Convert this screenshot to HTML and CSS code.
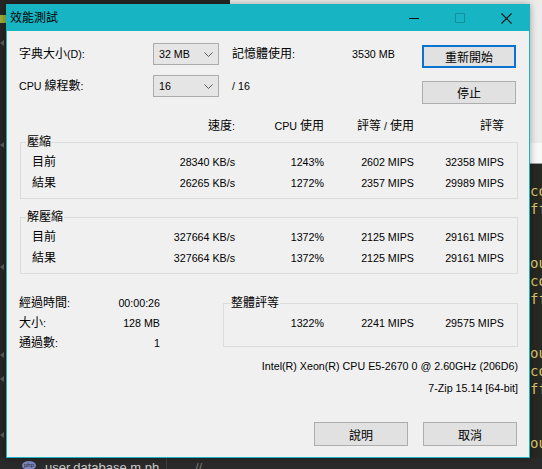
FILE: index.html
```html
<!DOCTYPE html>
<html lang="zh-Hant">
<head>
<meta charset="utf-8">
<title>效能測試</title>
<link rel="stylesheet" href="styles.css">
</head>
<body>
<div class="desktop">
  <div class="back-window"><div class="back-band"></div></div>
  <pre class="code-pane">con
ff


ou
con
ff


ou
con
ff


ou
con</pre>
  <div class="gutter">
    <span class="gutter-mark"></span>
    <span class="fold f1"></span>
    <span class="fold f2"></span>
    <span class="fold f3"></span>
    <span class="fold f4"></span>
    <span class="fold f5"></span>
    <span class="fold f6"></span>
  </div>
  <div class="tab-strip">
    <span class="php-icon">php</span>
    <span class="tab-name">user.database.m.ph</span>
    <span class="tab-divider"></span>
    <span class="tab-comment">//</span>
  </div>

  <div class="dialog">
    <div class="titlebar">
      <span class="title zh">效能測試</span>
      <div class="caption-buttons">
        <span class="cap"><svg width="10" height="10" viewBox="0 0 10 10"><line x1="0" y1="5.5" x2="10" y2="5.5" stroke="#111" stroke-width="1"/></svg></span>
        <span class="cap cap-disabled"><svg width="10" height="10" viewBox="0 0 10 10"><rect x="0.5" y="0.5" width="9" height="9" fill="none" stroke="currentColor" stroke-width="1"/></svg></span>
        <span class="cap"><svg width="11" height="11" viewBox="0 0 11 11"><path d="M0.5 0.5 L10.5 10.5 M10.5 0.5 L0.5 10.5" stroke="#111" stroke-width="1.1" fill="none"/></svg></span>
      </div>
    </div>

    <div class="client">
      <div class="settings">
        <span class="label"><span class="zh">字典大小</span>(D):</span>
        <div class="combo"><span>32 MB</span><svg class="chev" width="9" height="5" viewBox="0 0 9 5"><polyline points="0.5,0.5 4.5,4.5 8.5,0.5" fill="none" stroke="#5a5a5a" stroke-width="1"/></svg></div>
        <span></span>
        <span class="label"><span class="zh">記憶體使用</span>:</span>
        <span class="label">3530 MB</span>
        <button class="btn btn-default btn-top zh">重新開始</button>

        <span class="label">CPU <span class="zh">線程數</span>:</span>
        <div class="combo"><span>16</span><svg class="chev" width="9" height="5" viewBox="0 0 9 5"><polyline points="0.5,0.5 4.5,4.5 8.5,0.5" fill="none" stroke="#5a5a5a" stroke-width="1"/></svg></div>
        <span></span>
        <span class="label">/ 16</span>
        <span></span>
        <button class="btn btn-stop zh">停止</button>
      </div>

      <div class="row head">
        <span></span>
        <span><span class="zh">速度</span>:</span>
        <span>CPU <span class="zh">使用</span></span>
        <span><span class="zh">評等</span> / <span class="zh">使用</span></span>
        <span class="zh">評等</span>
      </div>

      <fieldset class="group">
        <legend class="zh">壓縮</legend>
        <div class="row"><span class="zh">目前</span><span>28340 KB/s</span><span>1243%</span><span>2602 MIPS</span><span>32358 MIPS</span></div>
        <div class="row"><span class="zh">結果</span><span>26265 KB/s</span><span>1272%</span><span>2357 MIPS</span><span>29989 MIPS</span></div>
      </fieldset>

      <fieldset class="group group-second">
        <legend class="zh">解壓縮</legend>
        <div class="row"><span class="zh">目前</span><span>327664 KB/s</span><span>1372%</span><span>2125 MIPS</span><span>29161 MIPS</span></div>
        <div class="row"><span class="zh">結果</span><span>327664 KB/s</span><span>1372%</span><span>2125 MIPS</span><span>29161 MIPS</span></div>
      </fieldset>

      <div class="summary">
        <div class="stats">
          <div class="stat"><span><span class="zh">經過時間</span>:</span><span>00:00:26</span></div>
          <div class="stat"><span><span class="zh">大小</span>:</span><span>128 MB</span></div>
          <div class="stat"><span><span class="zh">通過數</span>:</span><span>1</span></div>
        </div>
        <fieldset class="group total">
          <legend class="zh">整體評等</legend>
          <div class="total-row"><span>1322%</span><span>2241 MIPS</span><span>29575 MIPS</span></div>
        </fieldset>
      </div>

      <div class="info cpu">Intel(R) Xeon(R) CPU E5-2670 0 @ 2.60GHz (206D6)</div>
      <div class="info ver">7-Zip 15.14 [64-bit]</div>

      <div class="actions">
        <button class="btn btn-bottom zh">說明</button>
        <button class="btn btn-bottom zh">取消</button>
      </div>
    </div>
  </div>
</div>
</body>
</html>
```

FILE: styles.css
```css
* { box-sizing: border-box; }

html, body {
  margin: 0;
  padding: 0;
}

body {
  width: 542px;
  height: 469px;
  overflow: hidden;
  font-family: "Liberation Sans", "Noto Sans CJK TC", sans-serif;
  font-size: 10.7px;
  color: #000;
}

/* Chinese runs are set a little larger than the Latin digits */
.zh {
  font-size: 12px;
}
/* inline Chinese runs inside a mixed label must not grow the line box */
span > span.zh,
.label > span.zh {
  line-height: 1;
}

/* ---- desktop behind the dialog ---- */
.desktop {
  position: relative;
  width: 542px;
  height: 469px;
  overflow: hidden;
  background: #262626;
}

.back-window {
  position: absolute;
  left: 230px;
  top: 0;
  right: 0;
  height: 164px;
  background: #ececec;
  border-bottom: 1px solid #9c9c9c;
}

.back-band {
  position: absolute;
  left: 0;
  right: 0;
  top: 143px;
  height: 20px;
  background: #f8f8f8;
}

.code-pane {
  position: absolute;
  left: 529px;
  top: 165px;
  width: 13px;
  height: 300px;
  margin: 0;
  padding: 17px 0 0 1px;
  overflow: hidden;
  background: #272822;
  color: #dcc66f;
  font-family: "DejaVu Sans Mono", monospace;
  font-size: 14px;
  line-height: 18px;
}

.gutter {
  position: absolute;
  left: 0;
  top: 0;
  width: 8px;
  height: 469px;
}

.gutter-mark {
  position: absolute;
  left: 0;
  top: 15px;
  width: 6px;
  height: 8px;
  background: #9aa83a;
}

.fold {
  position: absolute;
  left: 0;
  width: 0;
  height: 0;
  border-top: 3px solid transparent;
  border-bottom: 3px solid transparent;
  border-right: 4px solid #5c5c5c;
}
.f1 { top: 40px; }
.f2 { top: 142px; }
.f3 { top: 264px; }
.f4 { top: 352px; }
.f5 { top: 376px; }
.f6 { top: 432px; }

.tab-strip {
  position: absolute;
  left: 0;
  top: 458px;
  width: 542px;
  height: 11px;
  background: #2a2a2a;
  overflow: hidden;
}

.php-icon {
  position: absolute;
  left: 22px;
  top: 3px;
  width: 14px;
  height: 9px;
  border-radius: 50%;
  background: #7d86c0;
  color: #222;
  font-size: 6px;
  line-height: 9px;
  text-align: center;
}

.tab-name {
  position: absolute;
  left: 45px;
  top: 0;
  color: #c9c9c9;
  font-size: 13px;
  line-height: 20px;
}

.tab-divider {
  position: absolute;
  left: 166px;
  top: 0;
  width: 1px;
  height: 11px;
  background: #3f3f3f;
}

.tab-comment {
  position: absolute;
  left: 195px;
  top: 0;
  color: #777;
  font-size: 13px;
  line-height: 20px;
}

/* ---- dialog window ---- */
.dialog {
  position: absolute;
  left: 6px;
  top: 4px;
  width: 524px;
  height: 454px;
  border: 1px solid #17b5c4;
  background: #f0f0f0;
  box-shadow: 0 0 7px rgba(0, 0, 0, 0.35);
  display: flex;
  flex-direction: column;
}

.titlebar {
  height: 26px;
  background: #17b5c4;
  display: flex;
  align-items: center;
}

.title {
  padding-left: 3px;
  line-height: 26px;
}

.caption-buttons {
  margin-left: auto;
  display: flex;
  height: 26px;
}

.cap {
  width: 46px;
  height: 26px;
  display: flex;
  align-items: center;
  justify-content: center;
}

.cap-disabled {
  color: rgba(0, 0, 0, 0.2);
}

.client {
  padding: 12px 12px 0 12px;
}

/* dictionary / thread settings */
.settings {
  display: grid;
  grid-template-columns: 134px 66px 13px 120px 70px 94px;
  grid-template-rows: 32px 32px;
  align-items: start;
}

.label {
  line-height: 22px;
  white-space: nowrap;
}

.combo {
  height: 22px;
  border: 1px solid #acacac;
  background: #e5e5e5;
  display: flex;
  align-items: center;
  justify-content: space-between;
  padding: 0 5px 0 5px;
}

.chev { display: block; }

.btn {
  font-family: inherit;
  color: #000;
  height: 23px;
  padding: 0;
  border: 1px solid #adadad;
  background: #e1e1e1;
}

.btn-default {
  border: 2px solid #0a73cf;
}

.btn-top { margin-top: 2px; }
.btn-stop { margin-top: 6px; }

/* result table */
.row {
  display: grid;
  grid-template-columns: 110px 93px 89px 90px 90px;
  line-height: 21px;
  white-space: nowrap;
}

.row > span { text-align: right; }
.row > span:first-child { text-align: left; }

.head {
  margin-top: 11px;
  padding-left: 13px;
  line-height: 16px;
}

.group {
  margin: 0 -1px 0 1px;
  padding: 2px 12px 4px 11px;
  border: 1px solid #dcdcdc;
  min-width: 0;
}

.group legend {
  margin-left: -6px;
  padding: 0 1px;
  line-height: 16px;
}

.group-second { margin-top: 10px; }

.summary {
  display: flex;
  align-items: flex-start;
  margin-top: 19px;
}

.stats { width: 141px; }

.stat {
  display: flex;
  justify-content: space-between;
  line-height: 20px;
}

.group.total {
  flex: 1;
  margin: 2px -1px 0 63px;
  padding: 2px 12px 13px 0;
}

.group.total legend {
  margin-left: 6px;
}

.total-row {
  display: grid;
  grid-template-columns: 100px 90px 90px;
  line-height: 20px;
  text-align: right;
}

.info {
  text-align: right;
  line-height: 20px;
  margin-right: -1px;
  white-space: nowrap;
}

.cpu { margin-top: 3px; }
.ver { margin-top: 2px; }

.actions {
  display: flex;
  justify-content: flex-end;
  gap: 15px;
  margin-top: 24px;
}

.btn-bottom {
  width: 94px;
  height: 24px;
}
```
